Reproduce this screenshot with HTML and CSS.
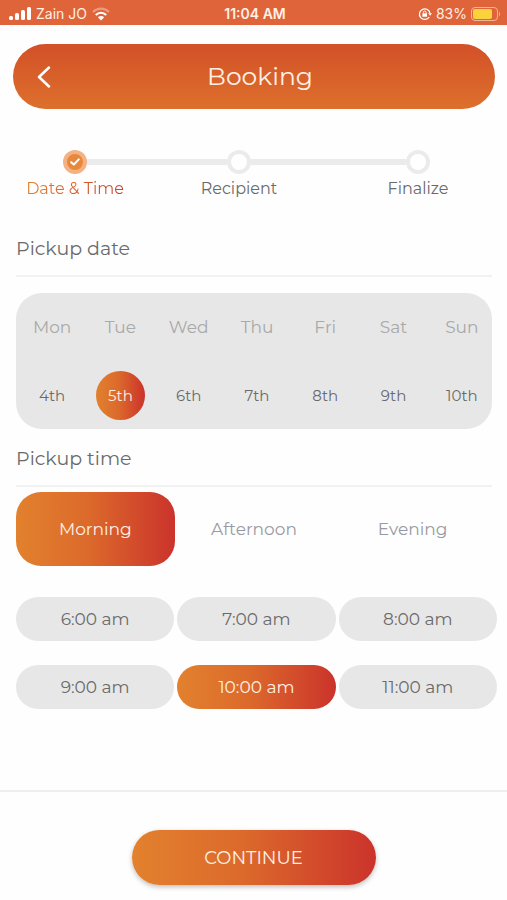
FILE: index.html
```html
<!DOCTYPE html>
<html lang="en">
<head>
  <meta charset="UTF-8">
  <meta name="viewport" content="width=device-width, initial-scale=1.0">
  <title>Booking</title>
  <link rel="stylesheet" href="styles.css">
</head>
<body>

  <div class="status-bar">
    <div class="status-left">
      <svg width="22" height="14" viewBox="0 0 22 14" fill="#fff" aria-hidden="true">
        <rect x="0" y="9" width="4" height="4" rx="1.5"/>
        <rect x="6" y="6" width="4" height="7" rx="1.5"/>
        <rect x="12" y="3" width="4" height="10" rx="1.5"/>
        <rect x="18" y="0" width="4" height="13" rx="1.5"/>
      </svg>
      <span>Zain JO</span>
      <svg width="18" height="14" viewBox="0 0 18 14" fill="none" stroke="#fff" stroke-width="2.2" aria-hidden="true">
        <path d="M1 5C5.500 0.500 12.500 0.500 17 5" opacity="0.35"/>
        <path d="M3.800 8C6.800 5 11.200 5 14.200 8"/>
        <path d="M9 13.500L5.800 10.300C7.600 8.700 10.400 8.700 12.200 10.300Z" fill="#fff" stroke="none"/>
      </svg>
    </div>
    <span class="status-time">11:04 AM</span>
    <div class="status-right">
      <svg width="14" height="14" viewBox="0 0 14 14" fill="none" stroke="#fff" stroke-width="1.300" aria-hidden="true">
        <path d="M11.200 10A5.300 5.300 0 1 1 12 6.500"/>
        <path d="M10.200 6.200H14L12.100 8.800Z" fill="#fff" stroke="none"/>
        <rect x="4.400" y="6.300" width="4.600" height="3.500" rx="0.500" fill="#fff" stroke="none"/>
        <path d="M5.400 6.500V5.300A1.300 1.300 0 0 1 8 5.300V6.500" stroke-width="1"/>
      </svg>
      <span>83%</span>
      <svg width="30" height="14" viewBox="0 0 30 14" aria-hidden="true">
        <rect x="0.500" y="0.500" width="26" height="13" rx="3.500" fill="none" stroke="#f3b49c"/>
        <rect x="2" y="2" width="19" height="10" rx="2" fill="#fbd23c"/>
        <path d="M28 4.500Q30 7 28 9.500Z" fill="#f3b49c"/>
      </svg>
    </div>
  </div>

  <header class="header">
    <button type="button" class="back-btn" aria-label="Back">
      <svg width="14" height="22" viewBox="0 0 14 22" fill="none" stroke="#fff" stroke-width="2.500" stroke-linecap="round" stroke-linejoin="round">
        <path d="M12 1.500L2 11L12 20.500"/>
      </svg>
    </button>
    <h1>Booking</h1>
  </header>

  <main>
    <ol class="steps">
      <li class="step active">
        <div class="track">
          <span class="marker">
            <svg width="10" height="8" viewBox="0 0 10 8" fill="none" stroke="#fff" stroke-width="2" stroke-linecap="round" stroke-linejoin="round" aria-hidden="true">
              <path d="M1.200 4.200L3.800 6.600L8.800 1.400"/>
            </svg>
          </span>
        </div>
        <span class="step-label">Date &amp; Time</span>
      </li>
      <li class="step">
        <div class="track"><span class="marker"></span></div>
        <span class="step-label">Recipient</span>
      </li>
      <li class="step">
        <div class="track"><span class="marker"></span></div>
        <span class="step-label">Finalize</span>
      </li>
    </ol>

    <section class="pickup-date">
      <h2>Pickup date</h2>
      <div class="calendar">
        <table>
          <thead>
            <tr><th>Mon</th><th>Tue</th><th>Wed</th><th>Thu</th><th>Fri</th><th>Sat</th><th>Sun</th></tr>
          </thead>
          <tbody>
            <tr>
              <td><button type="button" class="day">4th</button></td>
              <td><button type="button" class="day selected">5th</button></td>
              <td><button type="button" class="day">6th</button></td>
              <td><button type="button" class="day">7th</button></td>
              <td><button type="button" class="day">8th</button></td>
              <td><button type="button" class="day">9th</button></td>
              <td><button type="button" class="day">10th</button></td>
            </tr>
          </tbody>
        </table>
      </div>
    </section>

    <section class="pickup-time">
      <h2>Pickup time</h2>
      <div class="periods">
        <button type="button" class="period selected">Morning</button>
        <button type="button" class="period">Afternoon</button>
        <button type="button" class="period">Evening</button>
      </div>
      <div class="slots">
        <button type="button" class="slot">6:00 am</button>
        <button type="button" class="slot">7:00 am</button>
        <button type="button" class="slot">8:00 am</button>
        <button type="button" class="slot">9:00 am</button>
        <button type="button" class="slot selected">10:00 am</button>
        <button type="button" class="slot">11:00 am</button>
      </div>
    </section>
  </main>

  <footer class="footer">
    <button type="button" class="continue-btn">CONTINUE</button>
  </footer>

  <script>
    // One choice per group
    ['.day', '.period', '.slot'].forEach(group => {
      const items = document.querySelectorAll(group);
      items.forEach(item => item.addEventListener('click', () => {
        items.forEach(i => i.classList.remove('selected'));
        item.classList.add('selected');
      }));
    });
  </script>

</body>
</html>
```
FILE: styles.css
```css
* { box-sizing: border-box; }
body { font-family: Montserrat, Inter, sans-serif; margin: 0; min-height: 100vh; display: flex; flex-direction: column; background: #fefefe; color: #6a6a6a; }
button { font-family: inherit; border: none; background: none; padding: 0; cursor: pointer; color: inherit; }
h1, h2 { margin: 0; font-weight: 400; }

/* Status bar */
.status-bar { display: grid; grid-template-columns: 1fr auto 1fr; align-items: center; height: 25px; padding: 2px 6px 0 9px; background: #e06439; color: #fff0e6; font-family: Inter, sans-serif; font-size: 14px; line-height: 20px; }
.status-left, .status-right { display: flex; align-items: center; gap: 5px; }
.status-right { justify-content: flex-end; gap: 4px; }
.status-time { font-weight: 600; }

/* Header */
.header { display: grid; grid-template-columns: 62px 1fr 62px; align-items: center; height: 65px; margin: 19px 12px 0 13px; border-radius: 33px; background: linear-gradient(#d35028, #dd702c); color: #fff0e6; }
.header h1 { font-size: 25px; line-height: 32px; padding-left: 12px; padding-right: 0; margin-bottom: 2px; text-align: center; }
.back-btn { display: flex; align-items: center; justify-content: center; height: 44px; }

/* Steps */
.steps { display: grid; grid-template-columns: 118fr 210fr 148fr; list-style: none; margin: 41px 15px 0 16px; padding: 0; }
.step { text-align: center; }
.track { display: flex; align-items: center; }
.track::before, .track::after { content: ""; flex: 1; height: 6px; background: #ebebeb; }
.step:first-child .track::before, .step:last-child .track::after { background: none; }
.marker { display: flex; align-items: center; justify-content: center; width: 24px; height: 24px; border: 4px solid #ebebeb; border-radius: 50%; background: #fff; }
.active .marker { border-color: #f4b184; background: #e8883d; }
.step-label { display: inline-block; font-size: 16px; line-height: 20px; margin-top: 5px; }
.active .step-label { background: linear-gradient(90deg, #e2812e, #cf4030); background-clip: text; -webkit-background-clip: text; color: transparent; }

/* Sections */
h2 { font-size: 19px; line-height: 24px; margin: 0 15px 0 16px; padding-bottom: 14px; border-bottom: 2px solid #f2f2f2; }
.pickup-date { margin-top: 38px; }
.pickup-time { margin-top: 18px; }

/* Calendar */
.calendar { margin: 16px 15px 0 16px; padding-left: 2px; border-radius: 26px; background: #e7e7e7; overflow: hidden; }
table { width: calc(100% + 4px); table-layout: fixed; border-collapse: collapse; }
th, td { height: 68px; padding: 0; text-align: center; }
th { font-size: 17px; font-weight: 400; color: #a9a9a9; }
.day { width: 49px; height: 49px; border-radius: 50%; font-size: 15px; }

/* Time */
.periods { display: grid; grid-template-columns: repeat(3, 1fr); margin: 5px 15px 0 16px; }
.period { height: 74px; border-radius: 25px; font-size: 17px; color: #9a9aa2; }
.slots { display: grid; grid-template-columns: repeat(3, 1fr); gap: 24px 3px; margin: 31px 10px 32px 16px; }
.slot { height: 44px; border-radius: 22px; background: #e7e7e7; font-size: 17px; }
.selected { background: linear-gradient(90deg, #e2812e, #dc6a2b 45%, #cb332b); color: #fff0e6; }

/* Footer */
.footer { display: flex; justify-content: center; margin-top: auto; padding: 38px 0 15px; border-top: 2px solid #ecefef; }
.continue-btn { width: 244px; height: 55px; border-radius: 28px; background: linear-gradient(90deg, #e2812e, #dc6a2b 45%, #cb332b); color: #fff0e6; font-size: 18px; box-shadow: 0 2px 5px rgba(0,0,0,0.25); }
```
